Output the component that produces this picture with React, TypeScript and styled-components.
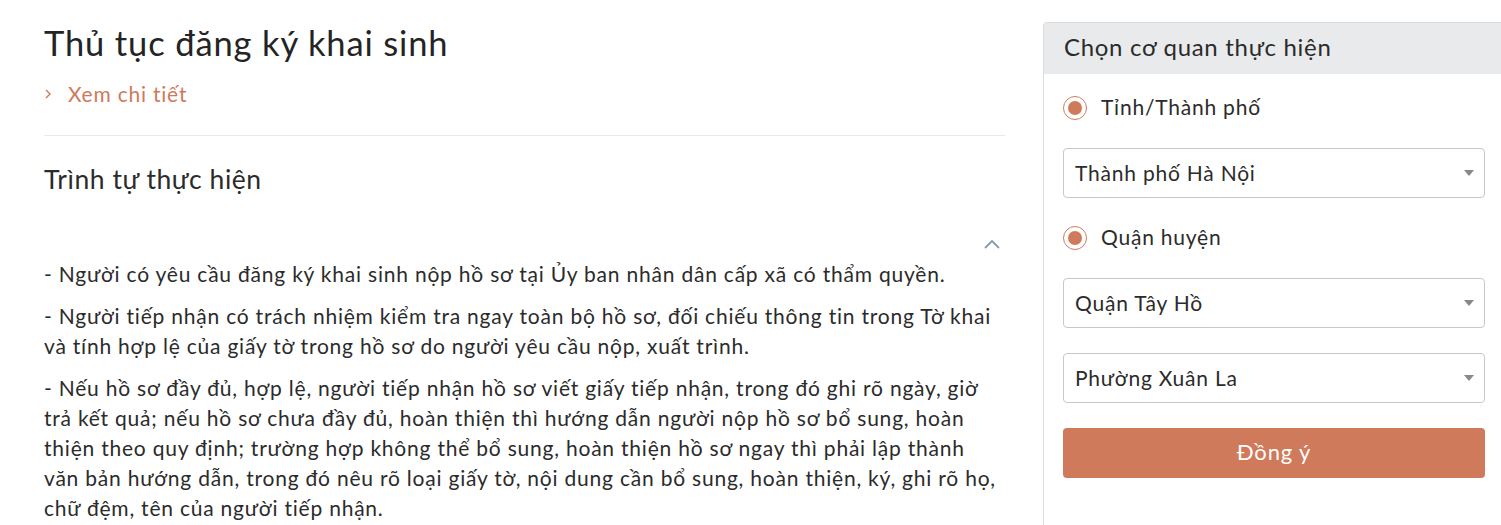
import React from "react";
import styled, { createGlobalStyle } from "styled-components";

const color = {
    text: "#2b2b2b",
    accent: "#cf7a5a",
    border: "#dcdcdc",
    headerBg: "#e9eaec",
};

const GlobalStyle = createGlobalStyle`
    html, body {
        margin: 0;
        padding: 0;
        background: #fff;
        overflow: hidden;
    }
    body {
        font-family: "Lato", "Open Sans", sans-serif;
        color: ${color.text};
        letter-spacing: 0.049em;
    }
`;

const Page = styled.div`
    display: flex;
    align-items: flex-start;
    width: 1510px;
    padding-left: 44px;
    gap: 38px;
`;

const Main = styled.section`
    width: 961px;
    display: flex;
    flex-direction: column;
`;

const Title = styled.h1`
    margin: 23px 0 0;
    font-size: 34.5px;
    font-weight: 400;
    line-height: 40px;
    letter-spacing: 0.025em;
    color: #242424;
`;

const DetailLink = styled.a`
    display: flex;
    align-items: center;
    gap: 16px;
    margin-top: 18px;
    color: ${color.accent};
    font-size: 21px;
    line-height: 26px;
    cursor: pointer;
`;

const Divider = styled.hr`
    width: 100%;
    margin: 28px 0 0;
    border: none;
    border-top: 1px solid #eaeaea;
`;

const SectionTitle = styled.h2`
    margin: 27px 0 0;
    font-size: 26.5px;
    font-weight: 400;
    line-height: 32px;
    letter-spacing: 0.021em;
`;

const ToggleRow = styled.div`
    display: flex;
    justify-content: flex-end;
    padding-right: 4px;
    margin-top: 44px;
    height: 20px;
`;

const Paragraph = styled.p`
    margin: 0 0 12px;
    font-size: 21px;
    line-height: 30px;
`;

const Panel = styled.aside`
    flex: 1;
    margin-top: 22px;
    border: 1px solid ${color.border};
    border-right: none;
    border-bottom: none;
    border-top-left-radius: 4px;
    min-height: 510px;
`;

const PanelHeader = styled.div`
    background: ${color.headerBg};
    padding: 0 20px 4px;
    height: 51px;
    box-sizing: border-box;
    display: flex;
    align-items: center;
    font-size: 24px;
    letter-spacing: 0.029em;
`;

const PanelBody = styled.div`
    padding: 0 20px 0 19px;
    width: 422px;
    display: flex;
    flex-direction: column;
`;

const RadioRow = styled.label<{ $top: number }>`
    display: flex;
    align-items: center;
    gap: 14px;
    height: 30px;
    margin: ${(p) => p.$top}px 0 0;
    font-size: 21px;
`;

const RadioText = styled.span`
    margin-top: -3px;
`;

const RadioCircle = styled.span`
    width: 24px;
    height: 24px;
    border: 1px solid ${color.accent};
    border-radius: 50%;
    display: flex;
    align-items: center;
    justify-content: center;
    box-sizing: border-box;

    &::after {
        content: "";
        width: 14px;
        height: 14px;
        border-radius: 50%;
        background: ${color.accent};
    }
`;

const Select = styled.div<{ $top: number }>`
    margin-top: ${(p) => p.$top}px;
    height: 50px;
    box-sizing: border-box;
    border: 1px solid #c8c8c8;
    border-radius: 4px;
    display: flex;
    align-items: center;
    justify-content: space-between;
    padding: 0 10px 2px 11px;
    font-size: 21px;
`;

const Caret = styled.span`
    width: 0;
    height: 0;
    margin-top: 2px;
    border-left: 5px solid transparent;
    border-right: 5px solid transparent;
    border-top: 6px solid #888;
`;

const Button = styled.button`
    margin-top: 25px;
    height: 50px;
    padding-bottom: 4px;
    border: none;
    border-radius: 4px;
    background: ${color.accent};
    color: #fff;
    font-family: inherit;
    letter-spacing: 0.04em;
    font-size: 22px;
    cursor: pointer;
`;

const ChevronRight = () => (
    <svg width="8" height="12" viewBox="0 0 8 12" fill="none">
        <path d="M2 2l4 4-4 4" stroke={color.accent} strokeWidth="1.4" />
    </svg>
);

const ChevronUp = () => (
    <svg width="18" height="12" viewBox="0 0 18 12" fill="none">
        <path d="M2 9l7-7 7 7" stroke="#8a9bb0" strokeWidth="1.8" />
    </svg>
);

const paragraphs = [
    "- Người có yêu cầu đăng ký khai sinh nộp hồ sơ tại Ủy ban nhân dân cấp xã có thẩm quyền.",
    "- Người tiếp nhận có trách nhiệm kiểm tra ngay toàn bộ hồ sơ, đối chiếu thông tin trong Tờ khai và tính hợp lệ của giấy tờ trong hồ sơ do người yêu cầu nộp, xuất trình.",
    "- Nếu hồ sơ đầy đủ, hợp lệ, người tiếp nhận hồ sơ viết giấy tiếp nhận, trong đó ghi rõ ngày, giờ trả kết quả; nếu hồ sơ chưa đầy đủ, hoàn thiện thì hướng dẫn người nộp hồ sơ bổ sung, hoàn thiện theo quy định; trường hợp không thể bổ sung, hoàn thiện hồ sơ ngay thì phải lập thành văn bản hướng dẫn, trong đó nêu rõ loại giấy tờ, nội dung cần bổ sung, hoàn thiện, ký, ghi rõ họ, chữ đệm, tên của người tiếp nhận.",
];

export default function App() {
    return (
        <>
            <GlobalStyle />
            <Page>
                <Main>
                    <Title>Thủ tục đăng ký khai sinh</Title>
                    <DetailLink>
                        <ChevronRight />
                        Xem chi tiết
                    </DetailLink>
                    <Divider />
                    <SectionTitle>Trình tự thực hiện</SectionTitle>
                    <ToggleRow>
                        <ChevronUp />
                    </ToggleRow>
                    {paragraphs.map((text) => (
                        <Paragraph key={text}>{text}</Paragraph>
                    ))}
                </Main>
                <Panel>
                    <PanelHeader>Chọn cơ quan thực hiện</PanelHeader>
                    <PanelBody>
                        <RadioRow $top={19}>
                            <RadioCircle />
                            <RadioText>Tỉnh/Thành phố</RadioText>
                        </RadioRow>
                        <Select $top={25}>
                            Thành phố Hà Nội
                            <Caret />
                        </Select>
                        <RadioRow $top={25}>
                            <RadioCircle />
                            <RadioText>Quận huyện</RadioText>
                        </RadioRow>
                        <Select $top={25}>
                            Quận Tây Hồ
                            <Caret />
                        </Select>
                        <Select $top={25}>
                            Phường Xuân La
                            <Caret />
                        </Select>
                        <Button>Đồng ý</Button>
                    </PanelBody>
                </Panel>
            </Page>
        </>
    );
}
